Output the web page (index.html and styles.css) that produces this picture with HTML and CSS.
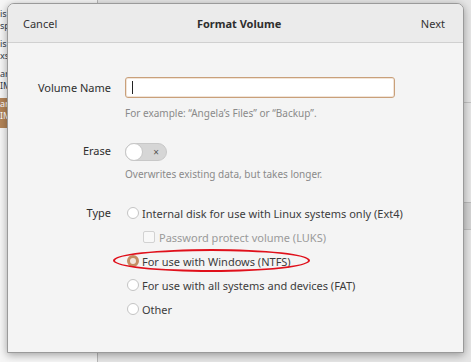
FILE: index.html
```html
<!DOCTYPE html>
<html>

<head>
    <meta charset="utf-8" />
    <title>Format Volume</title>
    <link rel="stylesheet" href="styles.css">
</head>

<body>
    <div id="desktop">
        <div class="side-list">
            <div class="side-item">is<br>sp</div>
            <div class="side-item">is<br>xs</div>
            <div class="side-item">ar<br>IM</div>
            <div class="side-item active">ar<br>IM</div>
        </div>
        <div class="divider"></div>
        <div class="right-pane">
            <div class="pane-row"></div>
            <div class="pane-row mid"></div>
            <div class="pane-row band"></div>
        </div>

        <div class="dialog">
            <div class="header">
                <span class="header-btn">Cancel</span>
                <span class="header-title">Format Volume</span>
                <span class="header-btn">Next</span>
            </div>
            <div class="content">
                <div class="form-row">
                    <span class="label">Volume Name</span>
                    <div class="field">
                        <div class="entry"><span class="caret"></span></div>
                        <span class="hint">For example: “Angela’s Files” or “Backup”.</span>
                    </div>
                </div>
                <div class="form-row erase-row">
                    <span class="label">Erase</span>
                    <div class="field">
                        <div class="switch">
                            <span class="knob"></span>
                            <span class="off-mark">×</span>
                        </div>
                        <span class="hint">Overwrites existing data, but takes longer.</span>
                    </div>
                </div>
                <div class="form-row type-row">
                    <span class="label">Type</span>
                    <div class="options">
                        <div class="option"><span class="radio"></span>Internal disk for use with Linux systems only (Ext4)</div>
                        <div class="option sub disabled"><span class="check"></span>Password protect volume (LUKS)</div>
                        <div class="option marked"><span class="radio on"></span>For use with Windows (NTFS)<span class="circle-mark"></span></div>
                        <div class="option"><span class="radio"></span>For use with all systems and devices (FAT)</div>
                        <div class="option"><span class="radio"></span>Other</div>
                    </div>
                </div>
            </div>
        </div>
    </div>
</body>

</html>
```

FILE: styles.css
```css
body {
    margin: 0;
    padding: 0;
    font-family: "Noto Sans", "DejaVu Sans", sans-serif;
    font-size: 11px;
    color: #3c3c3c;
}

#desktop {
    position: relative;
    width: 471px;
    height: 362px;
    overflow: hidden;
    background-color: #f6f6f6;
}

.side-list {
    position: absolute;
    left: 0;
    top: 0;
    width: 7px;
    overflow: hidden;
    padding-top: 8px;
    font-size: 9px;
    line-height: 12px;
    color: #2f3a4a;
}

.side-item {
    height: 30px;
    white-space: nowrap;
}

.side-item.active {
    background-color: #b38458;
    color: #fff;
}

.divider {
    position: absolute;
    left: 97px;
    top: 0;
    width: 1px;
    height: 362px;
    background-color: #b8b8b8;
}

.right-pane {
    position: absolute;
    left: 98px;
    top: 0;
    right: 0;
    height: 362px;
    background-color: #e6e6e6;
}

.pane-row {
    height: 102px;
    border-bottom: 1px solid #c4c4c4;
}

.pane-row.mid {
    height: 99px;
    border-bottom: 1px solid #bcbcbc;
}

.pane-row.band {
    height: 26px;
    background-color: #d4d4d4;
    border-bottom: 1px solid #c0c0c0;
}

.dialog {
    position: absolute;
    left: 7px;
    top: 3px;
    width: 455px;
    height: 348px;
    background-color: #f4f4f4;
    border: 1px solid #9a9a9a;
    border-radius: 7px 7px 0 0;
    box-shadow: 0 2px 8px rgba(0, 0, 0, 0.35);
    overflow: hidden;
}

.header {
    display: flex;
    align-items: center;
    justify-content: space-between;
    height: 38px;
    padding: 0 18px 0 15px;
    background-color: #ebebeb;
    border-bottom: 1px solid #d0d0d0;
}

.header-btn {
    color: #333;
}

.header-title {
    font-weight: bold;
    color: #2e2e2e;
}

.content {
    padding-top: 34px;
}

.form-row {
    display: grid;
    grid-template-columns: 103px 1fr;
    column-gap: 14px;
}

.label {
    text-align: right;
    color: #2e2e2e;
    line-height: 22px;
}

.field {
    display: flex;
    flex-direction: column;
}

.entry {
    width: 262px;
    height: 19px;
    background-color: #fff;
    border: 1px solid #c9a07a;
    border-radius: 3px;
    box-shadow: inset 0 0 0 1px #f1e4d8;
    display: flex;
    align-items: center;
    padding-left: 6px;
}

.caret {
    width: 1px;
    height: 13px;
    background-color: #222;
}

.hint {
    margin-top: 8px;
    font-size: 10px;
    line-height: 14px;
    color: #8a8a8a;
}

.erase-row {
    margin-top: 22px;
}

.erase-row .label {
    line-height: 18px;
}

.erase-row .hint {
    margin-top: 6px;
}

.switch {
    position: relative;
    width: 40px;
    height: 16px;
    background-color: #d6d6d6;
    border: 1px solid #c8c8c8;
    border-radius: 9px;
    margin-top: 1px;
}

.knob {
    position: absolute;
    left: -1px;
    top: -1px;
    width: 16px;
    height: 16px;
    background-color: #fff;
    border: 1px solid #c6c6c6;
    border-radius: 50%;
}

.off-mark {
    position: absolute;
    right: 7px;
    top: 0;
    font-size: 10px;
    line-height: 16px;
    color: #555;
}

.type-row {
    margin-top: 21px;
}

.options {
    display: flex;
    flex-direction: column;
    gap: 2px;
}

.option {
    position: relative;
    display: flex;
    align-items: center;
    height: 22px;
    margin-left: 2px;
}

.option.sub {
    margin-left: 18px;
}

.disabled {
    color: #9a9a9a;
}

.radio {
    width: 10px;
    height: 10px;
    border: 1px solid #c4c4c4;
    border-radius: 50%;
    background-color: #fff;
    margin-right: 3px;
    flex-shrink: 0;
}

.radio.on {
    background-color: #f1e6dc;
    border: 3px solid #c48e63;
    width: 6px;
    height: 6px;
}

.check {
    width: 10px;
    height: 10px;
    border: 1px solid #d2d2d2;
    border-radius: 2px;
    background-color: #f8f8f8;
    margin-right: 4px;
}

.circle-mark {
    position: absolute;
    left: -14px;
    top: -1px;
    width: 193px;
    height: 19px;
    border: 2px solid #e0101b;
    border-radius: 50%;
}
```
